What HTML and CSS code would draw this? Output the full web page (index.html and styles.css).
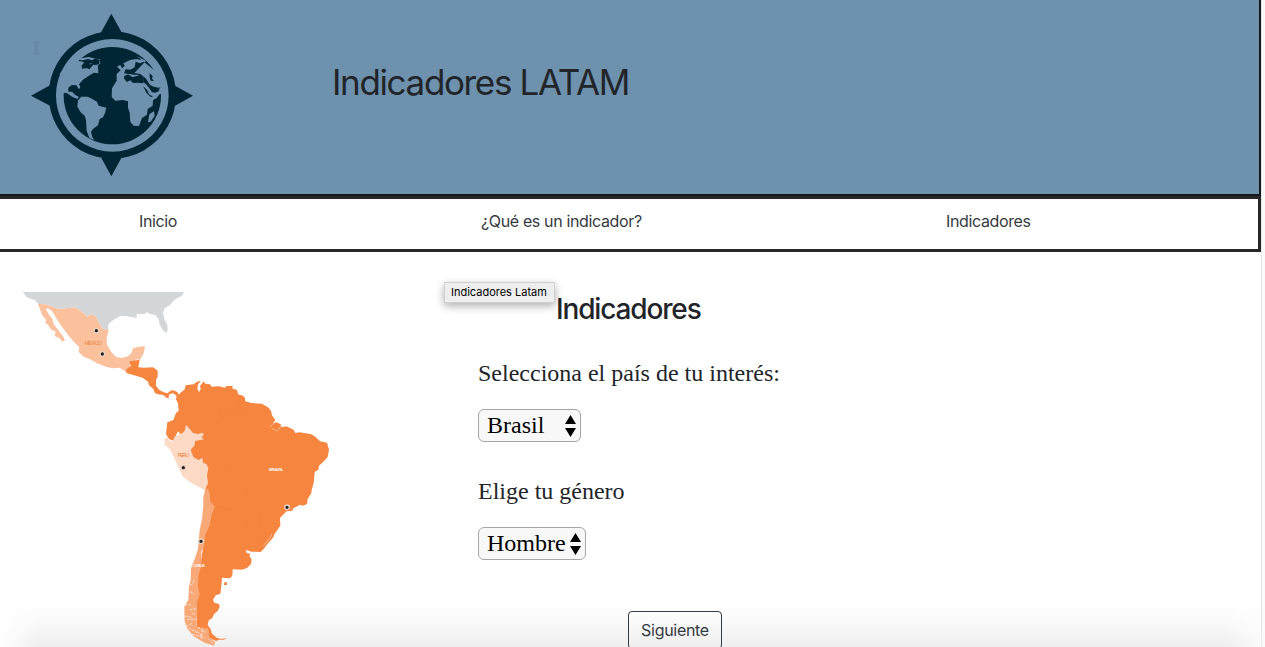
FILE: index.html
```html
<!DOCTYPE html>
<html lang="es">
<head>
<meta charset="utf-8">
<title>Indicadores Latam</title>
<link rel="stylesheet" href="styles.css">
</head>
<body>
<div class="page">
  <header class="header">
    <svg class="logo" viewBox="0 0 660 582" aria-hidden="true">
      <path class="ghost" d="M103 123h12v42h-12z"/>
      <g class="ink">
        <path d="M334 41l32 58h-64zM334 529l-30-55h60zM93 287l57-31v61zM579 287l-54-30v60z"/>
        <path fill-rule="evenodd" d="M337 94a191 191 0 1 0 .1 0zM337 117a169 169 0 1 1-.1 0z"/>
        <circle cx="337" cy="287" r="146"/>
      </g>
      <g class="land">
        <path d="M178 277L180 220L225 165L262 157L234 183L252 185L248 199L268 208L281 193L294 198L295 220L281 218L262 230L249 239L237 253L241 261L237 268L229 256L215 255L205 263L205 275L216 275L226 285L237 291L232 297L216 290L202 280Z"/>
        <path d="M234 176l31-5 34 7 2 12-8 8-16-8-12 5-17-11z"/>
        <path d="M234 301L244 290L263 290L277 297L291 305L296 317L319 323L315 339L309 352L299 357L294 376L279 387L273 395L276 408L282 421L268 413L260 393L258 360L254 347L242 337L232 320Z"/>
        <path d="M336 265L350 242L350 222L362 211L351 200L361 194L366 205L374 198L370 190L390 180L410 177L438 183L420 190L407 185L404 202L391 209L377 208L372 220L388 222L402 224L414 224L430 231L430 246L443 257L456 277L468 278L477 263L491 261L491 287L480 281L470 294L459 301L458 317L443 327L441 344L426 354L417 378L401 377L391 366L389 338L384 323L384 304L368 300L346 302L335 291Z"/>
        <path d="M410 168l62 50 18 40-15 5-23-5-15-23-16-13-18-3 35-37z"/>
        <path d="M462 333l2 15-12 17-8 2 4-24z"/>
      </g>
      <g class="sea">
        <path d="M242 182l22-5 12 4 11-7 12 7-2 12-12 2-13-6-11 15-15 2-1-11 12-5z"/>
        <path d="M372 229l12-6 14 9 22-7 11 7-1 18-18-2-13 1-8-8-11 5-7-9zM449 220l9 8-2 8 6 7-10-1-3-10zM429 258l13 13 5 12 12 7-7 1-13-13zM442 253l14 4 5 9 13 1 6-4-5 12-11 1-9-11-12-6z"/>
      </g>
    </svg>
    <h1 class="title">Indicadores LATAM</h1>
  </header>
  <nav class="nav">
    <a class="link first">Inicio</a>
    <a class="link second">¿Qué es un indicador?</a>
    <a class="link third">Indicadores</a>
  </nav>
  <main class="main">
    <svg class="map" viewBox="0 0 990 1101" role="img" aria-label="Mapa de Latinoamérica">
      <path class="usa" d="M39 36H522L515 47L492 60L480 75L464 85L459 99L464 119L472 135L473 152L468 159L458 150L448 132L447 119L436 105L421 102L410 97L403 103L380 101L380 114L367 112L348 108L330 108L309 121L296 132L293 151L277 146L267 129L257 109L243 103L232 111L219 98L207 90L194 82L149 88L106 73L84 72L76 61L50 52Z"/>
      <path class="mexico" d="M84 72L106 73L149 88L194 82L207 90L219 98L232 111L243 103L257 109L267 129L277 146L296 151L290 175L291 194L304 216L318 231L335 234L354 229L364 220L369 205L386 200L405 199L401 220L391 237L360 242L358 253L365 260L357 263L348 275L329 263L307 265L290 261L261 250L240 238L221 230L206 216L208 201L196 190L177 169L154 138L138 113L126 93L113 84L108 89L118 106L126 115L131 132L145 151L158 167L165 181L157 185L148 174L134 168L137 155L124 149L115 136L105 127L109 121L96 104Z"/>
      <path class="south" d="M348 269L357 262L365 259L358 250L360 242L386 240L390 236L388 245L385 262L401 263L429 262L443 272L443 290L438 300L438 317L448 330L461 337L473 340L481 332L489 331L502 336L508 350L504 357L497 345L488 339L477 344L476 354L469 353L460 345L444 343L434 338L430 327L417 316L414 305L398 293L370 285L349 279Z"/>
      <g transform="translate(420 270)">
        <path class="south" d="M84 75L104 58L107 46L131 43L141 35L153 32L144 43L142 57L148 66L152 57L150 48L155 41L162 34L165 41L180 43L185 50L207 49L225 53L229 48L247 48L248 56L261 60L264 73L279 77L285 84L286 94L304 99L336 101L356 113L363 123L366 136L376 151L368 160L379 157L392 163L396 172L409 169L431 179L436 189L449 187L484 193L496 200L510 214L531 218L537 239L533 261L520 275L507 287L505 299L494 306L491 339L485 359L484 370L473 387L471 402L458 407L450 404L430 415L427 422L410 424L399 434L390 444L391 467L374 491L370 502L353 521L340 538L332 546L304 545L287 539L290 549L301 551L298 558L305 568L303 582L291 594L276 599L248 598L247 617L240 625L216 623L214 648L211 671L197 676L189 689L193 698L207 702L209 711L203 723L192 732L187 744L176 751L173 765L182 777L185 790L200 803L215 807L198 813L178 804L140 771L138 650L155 560L175 430L165 358L165 310L110 260L98 200L84 184L70 212L58 208L48 193L52 157L70 150L78 129L86 122L84 100L77 86Z"/>
        <path class="peru" d="M43 208L52 201L57 210L68 216L74 201L98 188L104 182L108 165L119 176L128 188L144 192L159 188L161 196L154 201L162 208L135 213L134 225L122 240L130 261L145 270L157 264L160 280L169 281L175 295L171 315L174 339L165 361L142 349L118 335L98 319L86 293L70 258L60 238L44 224Z"/>
        <path class="chile" d="M165 361L175 355L180 375L180 393L194 410L185 434L179 466L166 493L162 530L154 544L154 587L145 617L144 652L149 671L139 706L140 771L175 775L178 802L196 817L193 827L164 818L131 799L111 775L104 753L103 710L115 690L117 650L122 631L123 595L133 570L144 537L149 480L156 448L160 405L160 382Z"/>
        <path class="dots" d="M122 645l8-5 2-12M105 705l17-2M121 665l12 7M106 738l17 4M128 730l9 5M109 768l19-8M116 774l28 15M126 793l32 8M143 785l20 20M157 779l-3 27M176 807l20 18M112 748l28 0M120 720l19-5M144 772l23 15"/>
        <path class="inlet" d="M360 170l9-8 8-6M366 176q9 2 13 8l9-7 5-12M340 527l20-23 6-12"/>
        <path class="south" d="M223 637h8v8h-9zM209 807l22-2-12 5z"/>
        <path class="border" d="M164 63l20 28 22 15 5 37M184 166l22-16 36-26 18 4M270 90l-2 24 25 20 16-7M288 134l-15 14M176 264l30 14 9 16 28 12 28 36 20 16-4 30M200 408l50 13 39 24 9 35M320 421l14 15-3 28-12-6M290 485l50 34"/>
        <text class="label peru-label" x="83" y="260" textLength="34">PERU</text>
        <text class="label" x="357" y="302" textLength="43">BRAZIL</text>
        <text class="label" x="129" y="591" textLength="36">CHILE</text>
      </g>
      <text class="label mexico-label" x="224" y="195" textLength="52">MÉXICO</text>
      <g class="city">
        <circle cx="259" cy="152" r="7"/><circle cx="277" cy="222" r="7"/>
        <circle cx="520" cy="563" r="7"/><circle cx="831" cy="682" r="7"/><circle cx="573" cy="784" r="7"/>
      </g>
    </svg>
    <section class="form">
      <h2 class="heading">Indicadores</h2>
      <p class="question">Selecciona el país de tu interés:</p>
      <div class="select country"><span>Brasil</span>
        <svg class="arrows" viewBox="0 0 11 22"><path d="M5.5 0L11 9H0zM5.5 22L11 13H0z"/></svg></div>
      <p class="question gender-question">Elige tu género</p>
      <div class="select gender"><span>Hombre</span>
        <svg class="arrows" viewBox="0 0 11 22"><path d="M5.5 0L11 9H0zM5.5 22L11 13H0z"/></svg></div>
      <div class="next">Siguiente</div>
    </section>
  </main>
  <div class="tooltip">Indicadores Latam</div>
</div>
<div class="scrollbar"></div>
</body>
</html>
```
FILE: styles.css
```css
* { box-sizing: border-box; }
body {
  margin: 0;
  height: 647px;
  display: flex;
  overflow: hidden;
  background:
    linear-gradient(to right, #fff, rgba(255, 255, 255, 0) 40px, rgba(255, 255, 255, 0) 1225px, rgba(255, 255, 255, .7) 1261px),
    linear-gradient(#fff 0, #fff 600px, #fafafa 622px, #eee 647px);
  color: #212529;
  font-family: Inter, "Liberation Sans", sans-serif;
}
.page { width: 1261px; height: 647px; overflow: hidden; flex: none; }
.scrollbar { width: 4px; background: #fafafa; border-left: 1px solid #e7e7e7; }
.header {
  height: 196px;
  display: flex;
  background: #6e91ae;
  border-right: 2px solid #14191d;
  border-bottom: 2px solid #14191d;
}
.logo { width: 220px; height: 194px; flex: none; }
.ink, .sea { fill: #002534; }
.land { fill: #6e91ae; }
.ghost { fill: #698aa7; }
.title {
  margin: 61px 0 0 112px;
  font-size: 35px;
  line-height: 43px;
  font-weight: 400;
  letter-spacing: -1.35px;
  white-space: nowrap;
}
.nav {
  height: 56px;
  display: flex;
  background: #fff;
  border: solid #272727;
  border-width: 3px 3px 3px 0;
  padding-top: 10px;
  font-size: 16px;
  line-height: 24px;
  color: #343a40;
}
.link { white-space: nowrap; letter-spacing: -0.36px; }
.first { width: 342px; margin-left: 139px; }
.second { width: 465px; }
.main { display: flex; padding: 28px 0 0 10px; }
.map { width: 330px; height: 367px; flex: none; }
.usa { fill: #d4d6d8; }
.mexico { fill: #fbc19d; }
.south { fill: #f6853f; }
.peru { fill: #fcdac5; }
.chile { fill: #f9a878; }
.dots { fill: none; stroke: #fff; stroke-width: 3; stroke-dasharray: 7 4; opacity: .75; }
.inlet { fill: none; stroke: #fbd0b4; stroke-width: 2; }
.border { fill: none; stroke: #ef813e; stroke-width: 1.5; }
.label { font: 700 13px "Liberation Sans", sans-serif; fill: #fff; }
.peru-label, .mexico-label { fill: #f0803c; font-size: 15px; font-weight: 400; }
.city { fill: #222; stroke: #eed3c3; stroke-width: 4; }
.form { margin-left: 138px; width: 500px; }
.heading {
  margin: 12px 0 0 78px;
  font-size: 28px;
  line-height: 34px;
  font-weight: 500;
  letter-spacing: -1.15px;
}
.question {
  margin: 31px 0 0;
  font: 24px/32px "Liberation Serif", serif;
  white-space: nowrap;
}
.gender-question { margin-top: 33px; }
.select {
  margin-top: 20px;
  height: 33px;
  display: flex;
  align-items: center;
  justify-content: space-between;
  padding: 0 4px 0 8px;
  border: 1px solid #a6a6a6;
  border-radius: 6px;
  background: #f8f8f8;
  color: #000;
  font: 24px/31px "Liberation Serif", serif;
}
.country { width: 103px; }
.gender { width: 108px; }
.arrows { width: 11px; height: 22px; flex: none; }
.next {
  margin: 51px 0 0 150px;
  width: 94px;
  height: 38px;
  border: 1px solid #343a40;
  border-radius: 4px;
  text-align: center;
  font-size: 16px;
  line-height: 37px;
  letter-spacing: -0.3px;
  color: #343a40;
}
.tooltip {
  position: absolute;
  left: 444px;
  top: 282px;
  width: 111px;
  height: 21px;
  border: 1px solid #d0d0d0;
  background: #eee;
  box-shadow: 0 3px 8px rgba(0, 0, 0, .32);
  color: #000;
  font-size: 11px;
  line-height: 19px;
  padding-left: 6px;
  white-space: nowrap;
}
```
